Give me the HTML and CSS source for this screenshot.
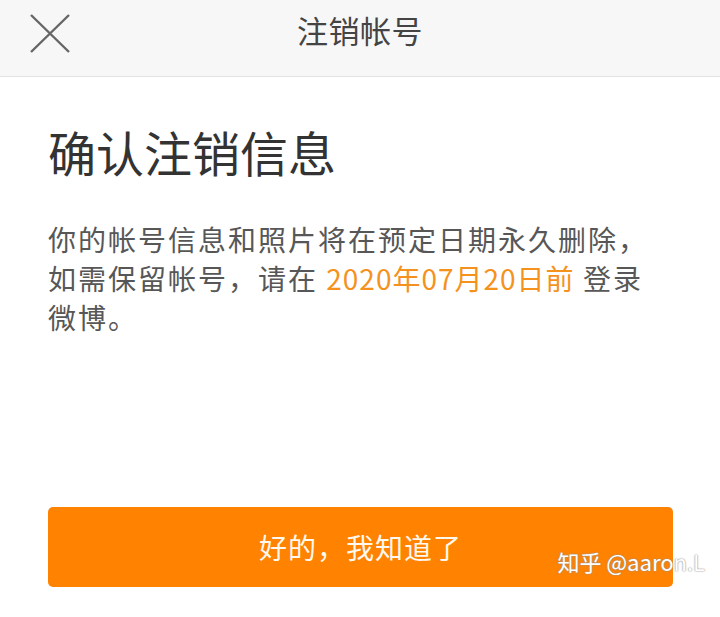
FILE: index.html
```html
<!DOCTYPE html>
<html lang="zh-CN">
<head>
    <meta charset="UTF-8">
    <meta name="viewport" content="width=device-width, initial-scale=1.0">
    <title>注销帐号</title>
    <link rel="stylesheet" href="styles.css">
</head>
<body>
    <div class="page">
        <header class="topbar">
            <button class="close-btn" aria-label="关闭">
                <svg width="40" height="40" viewBox="0 0 40 40">
                    <path d="M1 1 L39 38 M39 1 L1 38" stroke="#666" stroke-width="2.4" fill="none"/>
                </svg>
            </button>
            <div class="topbar-title">注销帐号</div>
        </header>

        <main class="content">
            <h1>确认注销信息</h1>
            <p class="notice">你的帐号信息和照片将在预定日期永久删除，<br>如需保留帐号，请在 <span class="date">2020年07月20日前</span> 登录<br>微博。</p>
            <button class="ok-btn">好的，我知道了</button>
        </main>

        <div class="watermark">知乎 @aaron.L</div>
    </div>
</body>
</html>
```

FILE: styles.css
```css
* {
    margin: 0;
    padding: 0;
    box-sizing: border-box;
    font-family: "Noto Sans CJK SC", "Noto Sans", sans-serif;
}

body {
    background-color: #fff;
    width: 720px;
    height: 617px;
    overflow: hidden;
}

.page {
    position: relative;
    height: 617px;
}

.topbar {
    height: 77px;
    background-color: #f7f7f7;
    border-bottom: 1px solid #e2e2e2;
    display: flex;
    align-items: center;
    justify-content: center;
    position: relative;
}

.close-btn {
    position: absolute;
    left: 30px;
    top: 14px;
    width: 40px;
    height: 40px;
    border: none;
    background: none;
}

.topbar-title {
    font-size: 31px;
    color: #444;
    line-height: 40px;
    margin-top: -16px;
    letter-spacing: 0.5px;
}

.content {
    padding: 0 48px;
}

h1 {
    font-size: 48px;
    font-weight: normal;
    color: #333;
    line-height: 56px;
    margin-top: 46px;
}

.notice {
    margin-top: 41px;
    font-size: 28px;
    line-height: 39px;
    color: #575757;
    letter-spacing: 2px;
    white-space: nowrap;
}

.date {
    color: #f5921e;
    letter-spacing: 1px;
}

.ok-btn {
    display: block;
    margin-top: 170px;
    width: 625px;
    height: 80px;
    border: none;
    border-radius: 5px;
    background-color: #ff8200;
    color: #fff8ee;
    font-size: 28px;
    letter-spacing: 1px;
}

.watermark {
    position: absolute;
    right: 15px;
    top: 545px;
    font-size: 22px;
    color: #fff;
    text-shadow: 0 0 2px #999, 0 0 1px #888;
}
```
